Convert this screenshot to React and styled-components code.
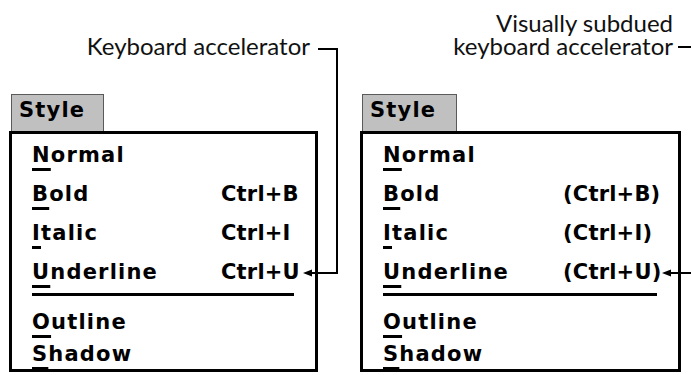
import React from 'react';
import styled, { createGlobalStyle } from 'styled-components';

const GlobalStyle = createGlobalStyle`
  html, body {
    margin: 0;
    padding: 0;
    background: #fff;
  }

  body {
    font-family: "DejaVu Sans", "Liberation Sans", sans-serif;
  }
`;

const Page = styled.div`
  position: relative;
  display: flex;
  width: 691px;
  height: 375px;
  overflow: hidden;
  background: #fff;
`;

const Figure = styled.section`
  display: flex;
  flex-direction: column;
  align-items: flex-start;
  width: ${({ $width }) => $width}px;
  padding-left: ${({ $inset }) => $inset}px;
  box-sizing: border-box;
`;

const Callout = styled.div`
  align-self: stretch;
  height: 94px;
  box-sizing: border-box;
  display: flex;
  flex-direction: column;
  justify-content: flex-end;
  align-items: flex-end;
  padding: 0 ${({ $gap }) => $gap}px 37px 0;
  font-family: Lato, "Open Sans", sans-serif;
  font-size: 24px;
  line-height: 23px;
  color: #111;
  text-align: right;
  white-space: nowrap;
`;

const Tab = styled.div`
  margin-left: 2px;
  width: ${({ $width }) => $width}px;
  height: 37px;
  box-sizing: border-box;
  padding-left: 7px;
  border: 1px solid #5a5a5a;
  border-bottom: none;
  background: #c0c0c0;
  font-family: "DejaVu Sans", sans-serif;
  font-weight: bold;
  font-size: 21px;
  line-height: 31px;
  letter-spacing: 1.2px;
  color: #000;
`;

const Menu = styled.div`
  width: ${({ $width }) => $width}px;
  height: 241px;
  box-sizing: border-box;
  padding: 2px 21px 0 20px;
  border: 3px solid #000;
  background: #fff;
`;

const Row = styled.div`
  display: grid;
  grid-template-columns: ${({ $labelCol }) => $labelCol}px auto;
  height: ${({ $h }) => $h}px;
  font-family: "DejaVu Sans", sans-serif;
  font-weight: bold;
  font-size: 21px;
  line-height: ${({ $h }) => $h}px;
  color: #000;
  white-space: nowrap;
`;

const Label = styled.span`
  letter-spacing: 1.2px;
`;

const Key = styled.span`
  text-decoration: underline;
  text-decoration-thickness: 3px;
  text-underline-offset: 6px;
  text-decoration-skip-ink: none;
`;

const Accel = styled.span`
  letter-spacing: 0.2px;
`;

const Separator = styled.div`
  height: 3px;
  margin: 1px 0 10px;
  background: #000;
`;

const Leaders = styled.svg`
  position: absolute;
  left: 0;
  top: 0;
  width: 691px;
  height: 375px;
  pointer-events: none;
`;

const top = [
  { name: 'Normal', accel: '' },
  { name: 'Bold', accel: 'Ctrl+B' },
  { name: 'Italic', accel: 'Ctrl+I' },
  { name: 'Underline', accel: 'Ctrl+U' },
];

const bottom = ['Outline', 'Shadow'];

const Item = ({ name, accel, h, labelCol }) => (
  <Row $h={h} $labelCol={labelCol}>
    <Label>
      <Key>{name[0]}</Key>
      {name.slice(1)}
    </Label>
    <Accel>{accel}</Accel>
  </Row>
);

const StyleMenu = ({ width, tabWidth, labelCol, wrap }) => (
  <>
    <Tab $width={tabWidth}>Style</Tab>
    <Menu $width={width}>
      {top.map((it) => (
        <Item
          key={it.name}
          name={it.name}
          accel={it.accel && wrap(it.accel)}
          h={39}
          labelCol={labelCol}
        />
      ))}
      <Separator />
      {bottom.map((n) => (
        <Item key={n} name={n} accel="" h={32} labelCol={labelCol} />
      ))}
    </Menu>
  </>
);

const Arrow = ({ x, y }) => (
  <polygon points={`${x},${y} ${x + 9},${y - 3.5} ${x + 9},${y + 3.5}`} fill="#000" />
);

export default function App() {
  return (
    <>
      <GlobalStyle />
      <Page>
        <Figure $width={345} $inset={9}>
          <Callout $gap={35}>
            <div>Keyboard accelerator</div>
          </Callout>
          <StyleMenu width={309} tabWidth={93} labelCol={189} wrap={(a) => a} />
        </Figure>
        <Figure $width={346} $inset={15}>
          <Callout $gap={18}>
            <div>Visually subdued</div>
            <div>keyboard accelerator</div>
          </Callout>
          <StyleMenu width={321} tabWidth={95} labelCol={180} wrap={(a) => `(${a})`} />
        </Figure>
        <Leaders viewBox="0 0 691 375">
          <path d="M318 49 H337 V273 H310" fill="none" stroke="#000" strokeWidth="2" />
          <Arrow x={303} y={273} />
          <path d="M678 47 H691" fill="none" stroke="#000" strokeWidth="2" />
          <path d="M691 273 H669" fill="none" stroke="#000" strokeWidth="2" />
          <Arrow x={662} y={273} />
        </Leaders>
      </Page>
    </>
  );
}
